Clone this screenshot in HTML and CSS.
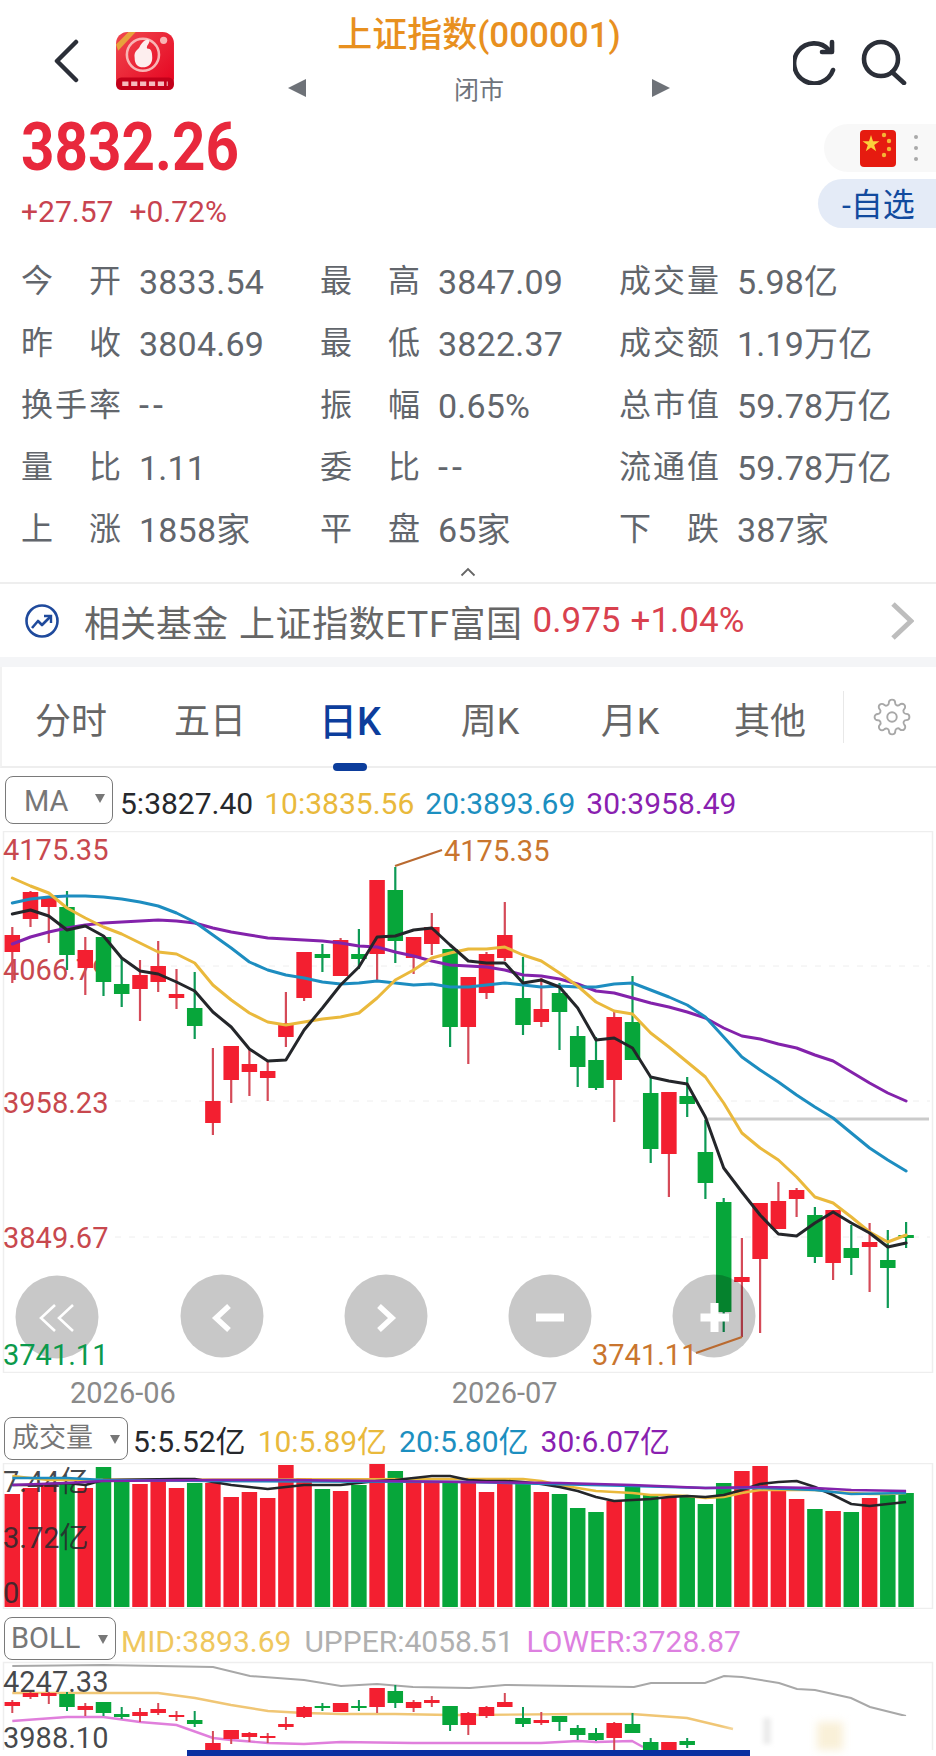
FILE: index.html
```html
<!DOCTYPE html>
<html lang="zh-CN">
<head>
<meta charset="utf-8">
<title>上证指数(000001)</title>
<link rel="stylesheet" href="styles.css">
</head>
<body>
<header class="nav">
  <div class="nav-left">
    <svg class="back" width="26" height="44" viewBox="0 0 26 44"><path d="M23 3 4 22 23 41" fill="none" stroke="#2b2f38" stroke-width="4.5" stroke-linecap="round" stroke-linejoin="round"/></svg>
    <svg class="logo" width="60" height="60" viewBox="0 0 58 58">
      <defs><linearGradient id="lg" x1="0" y1="0" x2="1" y2="1"><stop offset="0" stop-color="#f0474e"/><stop offset="1" stop-color="#e5001e"/></linearGradient></defs>
      <rect x="1" y="1" width="56" height="56" rx="11" fill="url(#lg)"/>
      <circle cx="27" cy="23" r="15.5" fill="none" stroke="#f9b4b4" stroke-width="2.5"/>
      <path d="M19 26c-1-7 3-7 5-11 1-3 7-9 9-6 1 3-3 5-2 8 4 0 5 3 5 9 0 6-4 9-9 9s-8-3-8-9z" fill="#fdeeee"/>
      <rect x="1" y="45" width="56" height="12" rx="5" fill="#c2001a"/>
      <path d="M7 51h44" stroke="#f6b9bd" stroke-width="4.5" stroke-dasharray="6 2.6"/>
      <circle cx="47" cy="9" r="3.5" fill="#f9b4b4"/>
      <path d="M1 13 13 1h7L3 19z" fill="#e7a23c"/>
    </svg>
  </div>
  <div class="nav-center">
    <h1 class="title">上证指数(000001)</h1>
    <div class="status">
      <span class="tri tri-left"></span>
      <span class="status-text">闭市</span>
      <span class="tri tri-right"></span>
    </div>
  </div>
  <div class="nav-right">
    <svg width="44" height="46" viewBox="0 0 44 46" fill="none" stroke="#2b2f38" stroke-width="4.6" stroke-linecap="round" stroke-linejoin="round"><path d="M40 31A20 20 0 1 1 36 11"/><path d="M39 3v10H29"/></svg>
    <svg width="46" height="46" viewBox="0 0 46 46" fill="none" stroke="#2b2f38" stroke-width="4.6" stroke-linecap="round"><circle cx="20" cy="20" r="17"/><path d="M31 33l12 11"/></svg>
  </div>
</header>

<section class="quote">
  <div class="quote-main">
    <div class="price">3832.26</div>
    <div class="change"><span>+27.57</span><span>+0.72%</span></div>
  </div>
  <div class="quote-side">
    <div class="flag-pill">
      <svg width="36" height="37" viewBox="0 0 36 37"><rect width="36" height="37" rx="4" fill="#e61b10"/><path d="M11 5l2 6.2h6.5l-5.300 3.800 2 6.200-5.200-3.800-5.200 3.800 2-6.200-5.300-3.800H9z" fill="#fbd13b"/><circle cx="24" cy="5" r="2.200" fill="#f5b335"/><circle cx="29" cy="11" r="2.200" fill="#f5b335"/><circle cx="29" cy="19" r="2.200" fill="#f5b335"/><circle cx="24" cy="25" r="2.200" fill="#f5b335"/></svg>
      <span class="dots"><i></i><i></i><i></i></span>
    </div>
    <div class="watch-pill">-自选</div>
  </div>
</section>

<section class="stats">
  <div class="stat"><span class="lab">今开</span><span class="val">3833.54</span></div>
  <div class="stat"><span class="lab">最高</span><span class="val">3847.09</span></div>
  <div class="stat"><span class="lab">成交量</span><span class="val">5.98亿</span></div>
  <div class="stat"><span class="lab">昨收</span><span class="val">3804.69</span></div>
  <div class="stat"><span class="lab">最低</span><span class="val">3822.37</span></div>
  <div class="stat"><span class="lab">成交额</span><span class="val">1.19万亿</span></div>
  <div class="stat"><span class="lab">换手率</span><span class="val val-dash">--</span></div>
  <div class="stat"><span class="lab">振幅</span><span class="val">0.65%</span></div>
  <div class="stat"><span class="lab">总市值</span><span class="val">59.78万亿</span></div>
  <div class="stat"><span class="lab">量比</span><span class="val">1.11</span></div>
  <div class="stat"><span class="lab">委比</span><span class="val val-dash">--</span></div>
  <div class="stat"><span class="lab">流通值</span><span class="val">59.78万亿</span></div>
  <div class="stat"><span class="lab">上涨</span><span class="val">1858家</span></div>
  <div class="stat"><span class="lab">平盘</span><span class="val">65家</span></div>
  <div class="stat"><span class="lab">下跌</span><span class="val">387家</span></div>
</section>

<div class="collapse"><svg width="16" height="10" viewBox="0 0 16 10"><path d="M1.500 8.500 8 2l6.500 6.500" fill="none" stroke="#666" stroke-width="1.800"/></svg></div>

<section class="fund">
  <svg class="fund-icon" width="36" height="36" viewBox="0 0 36 36" fill="none" stroke="#1f4a9c" stroke-width="2.600"><circle cx="18" cy="18" r="15.500"/><path d="M8 25l6-7 4 4 8-8" stroke-linejoin="round"/><path d="M20 13h7v7" stroke-width="2.400"/></svg>
  <span class="fund-name">相关基金</span>
  <span class="fund-name fund-etf">上证指数ETF富国</span>
  <span class="fund-num">0.975</span>
  <span class="fund-num">+1.04%</span>
  <svg class="fund-arrow" width="24" height="38" viewBox="0 0 24 38"><path d="M3 2l18 17L3 36" fill="none" stroke="#bdbdbd" stroke-width="5"/></svg>
</section>

<div class="band"></div>

<nav class="tabs">
  <span class="tab">分时</span>
  <span class="tab">五日</span>
  <span class="tab active">日K</span>
  <span class="tab">周K</span>
  <span class="tab">月K</span>
  <span class="tab">其他</span>
  <span class="tab-gear">
    <svg width="38" height="38" viewBox="0 0 24 24" fill="none" stroke="#a8a8a8" stroke-width="1.200"><circle cx="12" cy="12" r="3"/><path d="M19.400 15a1.650 1.650 0 0 0 .33 1.820l.06.06a2 2 0 0 1 0 2.830 2 2 0 0 1-2.830 0l-.06-.06a1.650 1.650 0 0 0-1.820-.33 1.650 1.650 0 0 0-1 1.510V21a2 2 0 0 1-2 2 2 2 0 0 1-2-2v-.09A1.650 1.650 0 0 0 9 19.400a1.650 1.650 0 0 0-1.820.33l-.06.06a2 2 0 0 1-2.830 0 2 2 0 0 1 0-2.830l.06-.06a1.650 1.650 0 0 0 .33-1.820 1.650 1.650 0 0 0-1.510-1H3a2 2 0 0 1-2-2 2 2 0 0 1 2-2h.09A1.650 1.650 0 0 0 4.600 9a1.650 1.650 0 0 0-.33-1.820l-.06-.06a2 2 0 0 1 0-2.830 2 2 0 0 1 2.830 0l.06.06a1.650 1.650 0 0 0 1.820.33H9a1.650 1.650 0 0 0 1-1.510V3a2 2 0 0 1 2-2 2 2 0 0 1 2 2v.09a1.650 1.650 0 0 0 1 1.510 1.650 1.650 0 0 0 1.820-.33l.06-.06a2 2 0 0 1 2.830 0 2 2 0 0 1 0 2.830l-.06.06a1.650 1.650 0 0 0-.33 1.820V9a1.650 1.650 0 0 0 1.510 1H21a2 2 0 0 1 2 2 2 2 0 0 1-2 2h-.09a1.650 1.650 0 0 0-1.510 1z"/></svg>
  </span>
</nav>

<div class="legend legend-ma">
  <div class="select select-ma">MA</div>
  <span class="c-ma5">5:3827.40</span>
  <span class="c-ma10">10:3835.56</span>
  <span class="c-ma20">20:3893.69</span>
  <span class="c-ma30">30:3958.49</span>
</div>

<svg class="chart" width="936" height="542" viewBox="0 831 936 542">
  <rect class="frame" x="3.500" y="831.500" width="929" height="541"/>
  <path class="grid" d="M115 966H930M115 1101H930M115 1237H930"/>
  <path class="limit" d="M706 1119H929"/>
  <text class="axis red" x="3" y="860">4175.35</text>
  <text class="axis red" x="3" y="980">4066.79</text>
  <text class="axis red" x="3" y="1113">3958.23</text>
  <text class="axis red" x="3" y="1248">3849.67</text>
  <path class="wick-r" d="M12.300 927V983M30.500 891V927M48.800 897V943M85.300 937V995M140 960V1021M158.200 941V992M176.500 969V1009M212.900 1048V1135M231.200 1046V1103M249.400 1050V1096M267.700 1060V1101M285.900 992V1047M304.100 952V1001M340.600 938V976M377.100 880V980M413.600 937V974M431.800 913V955M468.300 977V1064M486.500 952V999M504.800 902V961M541.300 978V1027M614.200 1012V1122M668.900 1092V1197M741.900 1238V1337M760.100 1203V1333M778.400 1182V1229M796.600 1188V1217M833.100 1210V1280M869.600 1223V1292"/>
  <path class="body-r" d="M12.300 935V952M30.500 892V919M48.800 898V907M85.300 950V968M140 975V989M158.200 966V982M176.500 994V998M212.900 1101V1123M231.200 1046V1080M249.400 1064V1072M267.700 1071V1078M285.900 1023V1037M304.100 952V998M340.600 940V976M377.100 880V954M413.600 937V958M431.800 927V944M468.300 977V1027M486.500 954V993M504.800 935V958M541.300 1009V1022M614.200 1017V1080M668.900 1092V1154M741.900 1277V1282M760.100 1203V1259M778.400 1201V1229M796.600 1190V1199M833.100 1210V1263M869.600 1242V1247"/>
  <path class="wick-g" d="M67 891V970M103.500 937V996M121.700 957V1007M194.700 972V1039M322.400 944V972M358.900 929V969M395.300 867V963M450.100 949V1047M523 957V1035M559.500 983V1050M577.700 1026V1087M596 1037V1090M632.500 976V1060M650.700 1077V1163M687.200 1077V1117M705.400 1120V1199M723.700 1198V1332M814.900 1207V1263M851.300 1225V1275M887.800 1230V1308M906.100 1222V1248"/>
  <path class="body-g" d="M67 907V955M103.500 937V982M121.700 984V994M194.700 1008V1026M322.400 954V958M358.900 954V959M395.300 890V941M450.100 949V1027M523 998V1025M559.500 993V1012M577.700 1036V1067M596 1060V1088M632.500 1022V1060M650.700 1093V1149M687.200 1096V1104M705.400 1152V1183M723.700 1202V1312M814.900 1215V1257M851.300 1248V1258M887.800 1260V1268M906.100 1235V1238"/>
  <polyline class="ma ma30" points="12.300,944 30.500,937 48.800,932 67,928 85.300,925 103.500,923 121.700,922 140,921 158.200,920 176.500,921 194.700,923 212.900,928 231.200,932 249.400,935 267.700,938 285.900,939 304.100,940 322.400,941 340.600,943 358.900,946 377.100,947 395.300,952 413.600,956 431.800,961 450.100,965 468.300,966 486.500,967 504.800,970 523,975 541.300,976 559.500,979 577.700,984 596,991 614.200,993 632.500,998 650.700,1003 668.900,1007 687.200,1012 705.400,1018 723.700,1028 741.900,1036 760.100,1039 778.400,1044 796.600,1048 814.900,1055 833.100,1061 851.300,1072 869.600,1083 887.800,1093 906.100,1101"/>
  <polyline class="ma ma20" points="12.300,903 30.500,899 48.800,897 67,896 85.300,896 103.500,897 121.700,899 140,902 158.200,906 176.500,913 194.700,922 212.900,935 231.200,948 249.400,962 267.700,970 285.900,975 304.100,978 322.400,982 340.600,984 358.900,983 377.100,981 395.300,983 413.600,985 431.800,984 450.100,987 468.300,987 486.500,985 504.800,983 523,985 541.300,987 559.500,986 577.700,987 596,987 614.200,984 632.500,983 650.700,990 668.900,997 687.200,1005 705.400,1017 723.700,1037 741.900,1057 760.100,1070 778.400,1082 796.600,1095 814.900,1107 833.100,1118 851.300,1133 869.600,1148 887.800,1160 906.100,1171"/>
  <polyline class="ma ma10" points="12.300,878 30.500,886 48.800,893 67,908 85.300,918 103.500,927 121.700,934 140,943 158.200,952 176.500,954 194.700,963 212.900,985 231.200,1000 249.400,1013 267.700,1022 285.900,1025 304.100,1022 322.400,1019 340.600,1017 358.900,1013 377.100,998 395.300,980 413.600,970 431.800,958 450.100,953 468.300,949 486.500,949 504.800,947 523,955 541.300,961 559.500,973 577.700,986 596,1002 614.200,1011 632.500,1014 650.700,1033 668.900,1047 687.200,1062 705.400,1077 723.700,1103 741.900,1133 760.100,1148 778.400,1160 796.600,1177 814.900,1197 833.100,1203 851.300,1217 869.600,1232 887.800,1242 906.100,1235"/>
  <polyline class="ma ma5" points="12.300,914 30.500,910 48.800,916 67,930 85.300,926 103.500,936 121.700,958 140,971 158.200,974 176.500,982 194.700,991 212.900,1012 231.200,1027 249.400,1049 267.700,1061 285.900,1060 304.100,1030 322.400,1008 340.600,985 358.900,967 377.100,937 395.300,936 413.600,930 431.800,928 450.100,945 468.300,961 486.500,963 504.800,963 523,983 541.300,980 559.500,987 577.700,1008 596,1040 614.200,1038 632.500,1048 650.700,1077 668.900,1081 687.200,1084 705.400,1117 723.700,1168 741.900,1192 760.100,1215 778.400,1234 796.600,1236 814.900,1223 833.100,1212 851.300,1223 869.600,1233 887.800,1247 906.100,1243"/>
  <circle class="btn" cx="57" cy="1317" r="41.500"/>
  <circle class="btn" cx="222" cy="1316" r="41.500"/>
  <circle class="btn" cx="386" cy="1316" r="41.500"/>
  <circle class="btn" cx="550" cy="1316" r="41.500"/>
  <circle class="btn" cx="714" cy="1316" r="41.500"/>
  <path class="btn-thin" d="M55 1305 41 1318 55 1331M73 1305 59 1318 73 1331"/>
  <path class="btn-bold" d="M229 1306 216 1318 229 1330M379 1306 392 1318 379 1330"/>
  <path class="btn-plus" d="M536 1317.500H564M700.500 1317.500H729M714.500 1303V1332"/>
  <text class="axis green" x="3" y="1365">3741.11</text>
  <path class="callout" d="M395 866 442 850M696 1353 742 1337"/>
  <text class="axis orange" x="444" y="861">4175.35</text>
  <text class="axis orange" x="592" y="1365">3741.11</text>
  <path class="frame-line" d="M3 1373H933"/>
</svg>

<div class="time-axis"><span>2026-06</span><span class="time-second">2026-07</span></div>

<div class="legend legend-vol">
  <div class="select select-vol">成交量</div>
  <span class="c-ma5">5:5.52亿</span>
  <span class="c-ma10">10:5.89亿</span>
  <span class="c-ma20">20:5.80亿</span>
  <span class="c-ma30">30:6.07亿</span>
</div>

<svg class="chart" width="936" height="146" viewBox="0 1463 936 146">
  <rect class="frame" x="3.500" y="1463.500" width="929" height="145"/>
  <path class="bar-r" d="M12.300 1494V1607M30.500 1488V1607M48.800 1484V1607M85.300 1488V1607M140 1484V1607M158.200 1481V1607M176.500 1488V1607M212.900 1483V1607M231.200 1497V1607M249.400 1492V1607M267.700 1498V1607M285.900 1465V1607M304.100 1478V1607M340.600 1491V1607M377.100 1464V1607M413.600 1483V1607M431.800 1482V1607M468.300 1483V1607M486.500 1492V1607M504.800 1478V1607M541.300 1492V1607M614.200 1501V1607M668.900 1497V1607M741.900 1471V1607M760.100 1466V1607M778.400 1488V1607M796.600 1499V1607M833.100 1511V1607M869.600 1498V1607"/>
  <path class="bar-g" d="M67 1482V1607M103.500 1467V1607M121.700 1482V1607M194.700 1483V1607M322.400 1489V1607M358.900 1485V1607M395.300 1471V1607M450.100 1483V1607M523 1482V1607M559.500 1494V1607M577.700 1508V1607M596 1512V1607M632.500 1486V1607M650.700 1495V1607M687.200 1497V1607M705.400 1504V1607M723.700 1483V1607M814.900 1509V1607M851.300 1512V1607M887.800 1495V1607M906.100 1493V1607"/>
  <text class="axis dark" x="3" y="1492">7.44亿</text>
  <text class="axis dark" x="3" y="1548">3.72亿</text>
  <text class="axis dark" x="3" y="1603">0</text>
  <polyline class="ma-v ma10" points="12.300,1476 30.500,1478 48.800,1480 468.300,1479 523,1479 541.300,1481 559.500,1485 577.700,1488 596,1491 614.200,1492 632.500,1493 650.700,1495 668.900,1495 687.200,1496 705.400,1498 723.700,1497 741.900,1493 760.100,1490 814.900,1490 833.100,1492 851.300,1493 869.600,1494 887.800,1494 906.100,1493"/>
  <polyline class="ma-v ma5" points="12.300,1485 30.500,1485 48.800,1484 67,1483 85.300,1485 103.500,1480 176.500,1479 194.700,1479 212.900,1482 231.200,1485 249.400,1487 267.700,1489 285.900,1487 304.100,1485 340.600,1485 358.900,1483 377.100,1481 395.300,1480 413.600,1478 431.800,1476 450.100,1476 468.300,1480 486.500,1481 504.800,1481 523,1482 541.300,1484 559.500,1487 577.700,1491 596,1497 614.200,1501 632.500,1500 650.700,1499 668.900,1497 687.200,1496 705.400,1497 723.700,1495 741.900,1490 760.100,1484 778.400,1482 796.600,1481 814.900,1487 833.100,1495 851.300,1504 869.600,1506 887.800,1504 906.100,1502"/>
  <polyline class="ma-v ma20" points="12.300,1478 67,1478 103.500,1480 212.900,1481 468.300,1482 632.500,1486 705.400,1488 760.100,1488 814.900,1490 851.300,1494 906.100,1493"/>
  <polyline class="ma-v ma30" points="12.300,1485 67,1483 103.500,1481 212.900,1480 285.900,1480 377.100,1481 468.300,1482 559.500,1483 632.500,1485 705.400,1488 760.100,1487 814.900,1488 851.300,1490 906.100,1491"/>
</svg>

<div class="legend legend-boll">
  <div class="select select-boll">BOLL</div>
  <span class="c-mid">MID:3893.69</span>
  <span class="c-upper">UPPER:4058.51</span>
  <span class="c-lower">LOWER:3728.87</span>
</div>

<svg class="chart chart-boll" width="936" height="88" viewBox="0 1662 936 88">
  <defs><linearGradient id="fade" x1="0" y1="0" x2="1" y2="0"><stop offset="0" stop-color="#fff" stop-opacity="0"/><stop offset=".2" stop-color="#fff" stop-opacity=".95"/><stop offset="1" stop-color="#fff" stop-opacity=".95"/></linearGradient></defs>
  <path class="frame" d="M3.500 1750V1662.500H932.500V1750"/>
  <polyline class="boll-line boll-upper" points="12.300,1666 103.500,1665 213,1667 250,1676 304,1680 341,1686 377,1684 413,1687 470,1688 505,1685 634,1687 651,1683 705,1683 724,1676 742,1677 779,1683 797,1689 815,1690 851,1698 870,1707 906,1716"/>
  <polyline class="boll-line boll-mid" points="12.300,1693 103.500,1693 158,1693 195,1698 231,1705 268,1711 304,1713 341,1714 395,1714 450,1715 470,1715 578,1714 632,1714 687,1718 733,1729"/>
  <polyline class="boll-line boll-lower" points="12.300,1721 67,1717 103.500,1717 140,1722 176.500,1725 213,1738 231,1740 268,1743 304,1744 341,1742 413,1743 470,1743 541,1743 578,1741 596,1742 632,1741 643,1747"/>
  <path class="wick-r thin" d="M12.300 1700V1713M30.500 1692V1699M48.800 1692V1704M85.300 1703V1716M140 1708V1722M158.200 1703V1715M176.500 1711V1721M212.900 1731V1750M231.200 1730V1744M249.400 1732V1742M267.700 1733V1743M285.900 1717V1730M304.100 1706V1718M340.600 1703V1712M377.100 1688V1713M413.600 1700V1712M431.800 1696V1707M468.300 1712V1735M486.500 1706V1718M504.800 1693V1707M541.300 1712V1725M614.200 1722V1750"/>
  <path class="body-r" d="M12.300 1702V1706M30.500 1693V1697M48.800 1693V1696M85.300 1706V1710M140 1712V1716M158.200 1709V1713M176.500 1715V1717M212.900 1743V1750M231.200 1730V1739M249.400 1733V1737M267.700 1736V1738M285.900 1724V1727M304.100 1707V1717M340.600 1703V1712M377.100 1688V1707M413.600 1702V1708M431.800 1700V1703M468.300 1713V1725M486.500 1707V1716M504.800 1702V1707M541.300 1720V1723M614.200 1723V1738M668.900 1742V1750"/>
  <path class="wick-g thin" d="M67 1692V1711M103.500 1702V1716M121.700 1707V1719M194.700 1711V1727M322.400 1703V1711M358.900 1700V1711M395.300 1685V1708M450.100 1706V1731M523 1707V1727M559.500 1716V1731M577.700 1725V1740M596 1728V1741M632.500 1713V1733M650.700 1738V1750M687.200 1738V1748"/>
  <path class="body-g" d="M67 1694V1707M103.500 1702V1713M121.700 1714V1717M194.700 1720V1724M322.400 1706V1708M358.900 1706V1708M395.300 1691V1703M450.100 1706V1725M523 1718V1724M559.500 1716V1722M577.700 1728V1735M596 1733V1740M632.500 1724V1733M650.700 1742V1750M687.200 1741V1745"/>
  <rect x="720" y="1716" width="210" height="34" fill="url(#fade)"/>
  <rect class="smudge-grey" x="763" y="1718" width="8" height="26"/>
  <rect class="smudge-gold" x="817" y="1722" width="26" height="28"/>
  <text class="axis dark" x="3" y="1692">4247.33</text>
  <text class="axis dark" x="3" y="1748">3988.10</text>
</svg>

<div class="home-bar"></div>
</body>
</html>
```
FILE: styles.css
```css
* { box-sizing: border-box; }
html, body { margin: 0; padding: 0; background: #fff; }
body {
  width: 936px;
  height: 1756px;
  overflow: hidden;
  font-family: Roboto, "Noto Sans CJK SC", sans-serif;
  color: #666;
}

/* nav */
.nav { display: grid; grid-template-columns: 288px 382px 1fr; height: 118px; }
.nav-left { display: flex; align-items: flex-start; padding: 31px 0 0 53px; gap: 36px; }
.back { margin-top: 8px; }
.nav-center { display: flex; flex-direction: column; align-items: center; }
.title {
  margin: 10px 0 0;
  height: 52px;
  line-height: 52px;
  font-size: 35px;
  font-weight: 500;
  color: #e8901f;
  white-space: nowrap;
}
.status { display: flex; width: 100%; justify-content: space-between; align-items: center; margin-top: 4px; height: 44px; }
.status-text { font-size: 25px; color: #6f747c; }
.tri { width: 0; height: 0; border-top: 9px solid transparent; border-bottom: 9px solid transparent; }
.tri-left { border-right: 18px solid #6e7278; }
.tri-right { border-left: 18px solid #6e7278; }
.nav-right { display: flex; justify-content: flex-end; gap: 24px; padding: 39px 29px 0 0; align-items: flex-start; }

/* quote */
.quote { display: flex; justify-content: space-between; height: 133px; }
.quote-main { padding-left: 21px; }
.price {
  width: 240px;
  font-size: 66px;
  line-height: 60px;
  font-weight: 700;
  color: #e8283c;
  white-space: nowrap;
  transform: scaleX(.885);
  transform-origin: left center;
}
.change { display: flex; gap: 16px; margin-top: 14px; font-size: 30px; line-height: 40px; color: #c8434f; }
.quote-side { display: flex; flex-direction: column; align-items: flex-end; padding-top: 6px; gap: 7px; }
.flag-pill {
  display: flex;
  align-items: center;
  width: 112px;
  height: 48px;
  padding-left: 36px;
  gap: 18px;
  background: #f8f8f8;
  border-radius: 24px 0 0 24px;
}
.dots { display: flex; flex-direction: column; gap: 7px; }
.dots i { display: block; width: 4px; height: 4px; border-radius: 50%; background: #a9a9a9; }
.watch-pill {
  width: 118px;
  height: 49px;
  padding-left: 24px;
  line-height: 52px;
  font-size: 32px;
  color: #124a9e;
  background: #e4ebf7;
  border-radius: 25px 0 0 25px;
  white-space: nowrap;
}

/* stats */
.stats { display: grid; grid-template-columns: repeat(3, 299px); grid-auto-rows: 62px; padding-left: 21px; height: 310px; }
.stat { display: flex; align-items: center; gap: 18px; font-size: 32px; color: #62666c; white-space: nowrap; }
.lab { width: 100px; height: 40px; line-height: 40px; margin-bottom: 2px; text-align: justify; text-align-last: justify; }
.val { height: 40px; line-height: 40px; font-size: 34px; letter-spacing: .2px; }
.val-dash { letter-spacing: 4px; font-size: 36px; }

.collapse { display: flex; justify-content: center; align-items: center; height: 21px; }

/* fund */
.fund { display: flex; align-items: center; height: 75px; border-top: 2px solid #eee; padding-left: 24px; }
.fund-icon { margin-right: 24px; flex: none; }
.fund-name { font-size: 36px; color: #666; white-space: nowrap; }
.fund-etf { margin-left: 11px; letter-spacing: .6px; }
.fund-num { font-size: 35px; color: #d9414e; margin-left: 10px; white-space: nowrap; }
.fund-arrow { margin-left: auto; margin-right: 22px; }
.band { height: 10px; background: #f4f5f7; }

/* tabs */
.tabs { display: flex; height: 101px; align-items: center; border-bottom: 2px solid #eee; border-left: 2px solid #f2f2f2; }
.tab { position: relative; width: 140px; margin-top: 3px; text-align: center; font-size: 36px; color: #666; white-space: nowrap; }
.tab:first-child { width: 138px; }
.tab.active { color: #0c3d9c; font-size: 38px; font-weight: 500; }
.tab.active::after {
  content: "";
  position: absolute;
  left: 53px;
  bottom: -25px;
  width: 34px;
  height: 8px;
  border-radius: 4px;
  background: #0c3d9c;
}
.tab-gear { display: flex; align-items: center; height: 52px; margin-left: 3px; padding-left: 29px; border-left: 1px solid #e8e8e8; }

/* legends */
.legend { display: flex; align-items: center; font-size: 30px; white-space: nowrap; }
.legend-ma { height: 63px; padding-left: 5px; gap: 11px; }
.legend-ma span { margin-top: 7px; }
.legend-vol { height: 55px; padding: 6px 0 0 4px; gap: 12px; }
.legend-boll { height: 53px; padding: 6px 0 0 4px; gap: 13px; }
.legend-boll span { margin-top: 5px; }
.select {
  position: relative;
  flex: none;
  border: 1.5px solid #7a7a7a;
  border-radius: 8px;
  font-size: 27px;
  color: #777;
}
.select::after {
  content: "";
  position: absolute;
  right: 7px;
  top: 17px;
  border-left: 5.5px solid transparent;
  border-right: 5.5px solid transparent;
  border-top: 9px solid #777;
}
.select-ma { width: 108px; height: 48px; line-height: 48px; font-size: 29px; padding-left: 18px; margin-right: -4px; }
.select-vol { width: 124px; height: 43px; line-height: 40px; padding-left: 7px; margin-right: -7px; }
.select-boll { width: 112px; height: 43px; line-height: 40px; font-size: 29px; padding-left: 6px; margin-right: -8px; }
.c-ma5 { color: #26282c; }
.c-ma10 { color: #e9b93c; }
.c-ma20 { color: #1c8fc0; }
.c-ma30 { color: #8a1fb0; }
.c-mid { color: #efc75e; }
.c-upper { color: #b0b0b0; }
.c-lower { color: #dd80e0; }

/* charts */
.chart { display: block; }
.chart-boll { overflow: visible; }
.frame { fill: none; stroke: #eee; stroke-width: 1.5; }
.frame-line { stroke: #eee; stroke-width: 2; }
.grid { stroke: #eee; stroke-width: 1; stroke-dasharray: 6 8; fill: none; }
.limit { stroke: #cbcbcb; stroke-width: 3; }
.axis { font-family: Roboto, "Noto Sans CJK SC", sans-serif; font-size: 29px; }
.red { fill: #c8484e; }
.green { fill: #0b9a4c; }
.orange { fill: #c9752e; }
.dark { fill: #26282c; fill-opacity: .85; }
.wick-r { fill: none; stroke: #d54a58; stroke-width: 2.2; }
.wick-g { fill: none; stroke: #0d9a55; stroke-width: 2.2; }
.wick-r.thin, .wick-g.thin { stroke-width: 2; }
.body-r { fill: none; stroke: #f31f30; stroke-width: 15.5; }
.body-g { fill: none; stroke: #07a63a; stroke-width: 15.5; }
.bar-r { fill: none; stroke: #f31f30; stroke-width: 15.5; }
.bar-g { fill: none; stroke: #07a63a; stroke-width: 15.5; }
.ma { fill: none; stroke-width: 3; stroke-linejoin: round; stroke-linecap: round; }
.ma-v { fill: none; stroke-width: 2.6; stroke-linejoin: round; }
.ma5 { stroke: #24262a; }
.ma10 { stroke: #eab93c; }
.ma20 { stroke: #1d8dc0; }
.ma30 { stroke: #8322ab; }
.btn { fill: #000; fill-opacity: .215; }
.btn-thin { fill: none; stroke: #fff; stroke-width: 2.6; }
.btn-bold { fill: none; stroke: #fff; stroke-width: 5.5; }
.btn-plus { fill: none; stroke: #fff; stroke-width: 8; }
.callout { fill: none; stroke: #b96a30; stroke-width: 2.2; }
.boll-line { fill: none; stroke-width: 2; }
.boll-upper { stroke: #a8a8a8; }
.boll-mid { stroke: #f0c675; stroke-width: 2.4; }
.boll-lower { stroke: #e07fdc; stroke-width: 2.4; }
.smudge-grey { fill: #ececec; filter: blur(2px); }
.smudge-gold { fill: #f9f0d8; filter: blur(4px); }

.time-axis { display: flex; height: 35px; padding-left: 70px; font-size: 29px; line-height: 40px; color: #8a8a8a; }
.time-second { margin-left: 276px; }

.home-bar { width: 563px; height: 6px; margin-left: 187px; background: #0a2fa0; }
```
